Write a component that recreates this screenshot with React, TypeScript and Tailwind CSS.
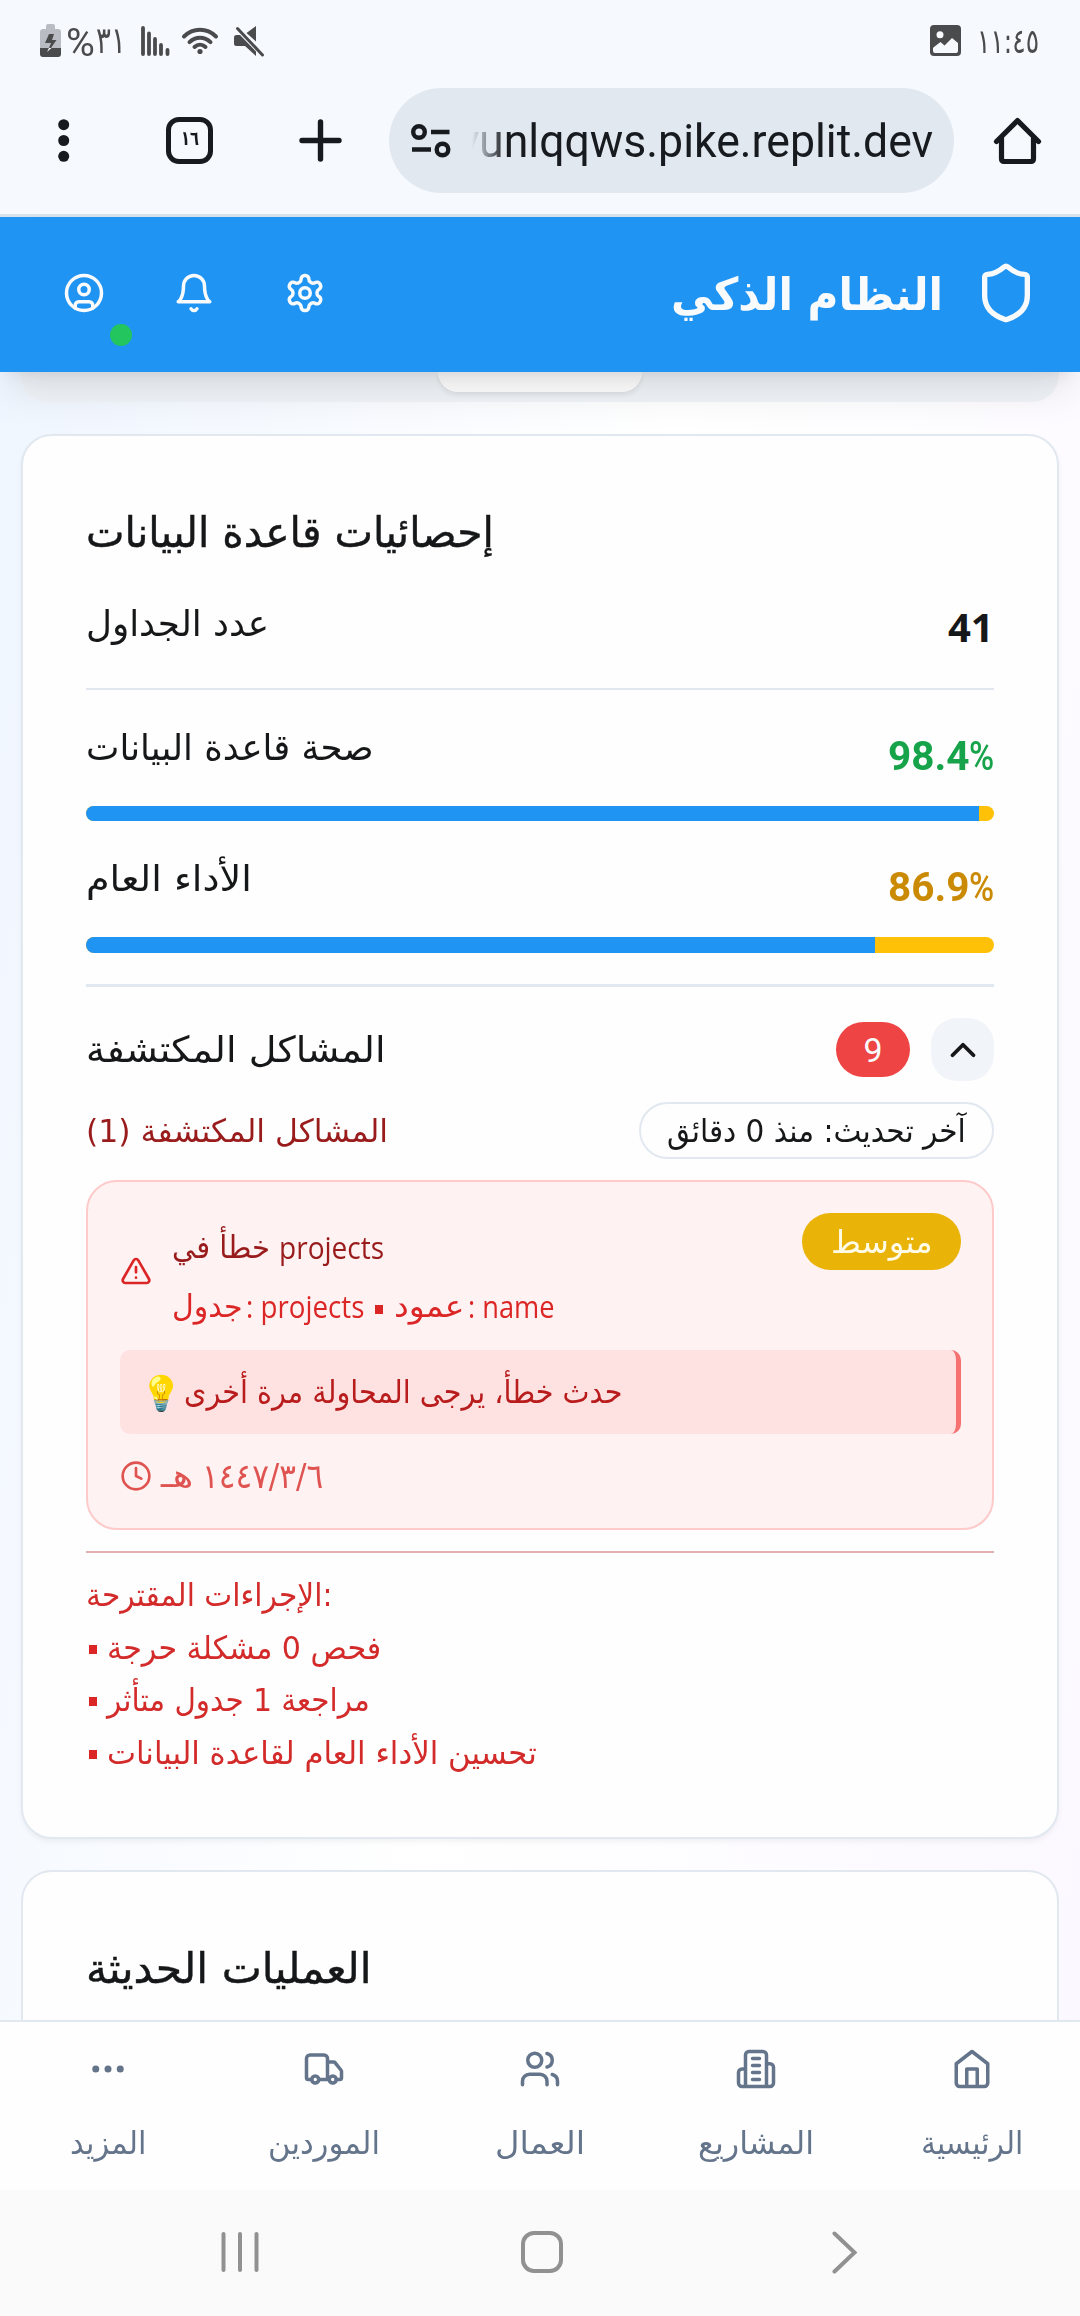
import { useLayoutEffect, useRef, useState } from "react";
import type { ReactNode } from "react";

const ARABIC = "font-['DejaVu_Sans_Condensed','DejaVu_Sans',sans-serif]";

/** One line of text, stretched or squeezed horizontally to a given width. */
function Fit({ w, className = "", dir, children }: { w: number; className?: string; dir?: "rtl" | "ltr"; children: ReactNode }) {
  const ref = useRef<HTMLSpanElement>(null);
  const [scale, setScale] = useState(1);
  useLayoutEffect(() => {
    if (ref.current) setScale(w / ref.current.offsetWidth);
  }, [w]);
  return (
    <span className={`block shrink-0 ${className}`} style={{ width: w }}>
      <span ref={ref} dir={dir} className="inline-block origin-left whitespace-nowrap" style={{ transform: `scaleX(${scale})` }}>
        {children}
      </span>
    </span>
  );
}

function Icon({ size, className = "", children, sw = 2 }: { size: number; className?: string; children: ReactNode; sw?: number }) {
  return (
    <svg width={size} height={size} viewBox="0 0 24 24" fill="none" stroke="currentColor" strokeWidth={sw} strokeLinecap="round" strokeLinejoin="round" className={`block shrink-0 ${className}`}>
      {children}
    </svg>
  );
}

function StatusBar() {
  return (
    <div className="flex h-[83px] items-start pl-10 pr-[41px] text-[#4a4b4d]">
      <svg className="mt-6 shrink-0" width="21" height="33" viewBox="0 0 21 33">
        <path d="M6 5V2a2 2 0 0 1 2-2h5a2 2 0 0 1 2 2v3h3a3 3 0 0 1 3 3v17H0V8a3 3 0 0 1 3-3z" fill="#b9bcc2" />
        <path d="M0 24h21v6a3 3 0 0 1-3 3H3a3 3 0 0 1-3-3z" fill="#4a4b4d" />
        <path d="M9 10h5l-2 6h4.500L11 24H9l2-5H5z" fill="#4a4b4d" />
        <path d="M9 24h2.500L7 28z" fill="#fff" />
      </svg>
      <Fit w={29} className="ml-[5px] mt-[23px] font-[Roboto] text-[38px] leading-[40px]">%</Fit>
      <Fit w={30} className={`ml-[1px] mt-[21px] text-[37px] leading-[40px] ${ARABIC}`}>٣١</Fit>
      <svg className="ml-[15px] mt-[26px] shrink-0" width="29" height="30" viewBox="0 0 29 30" stroke="currentColor" strokeWidth="3.800" strokeLinecap="round">
        <path d="M2 2v26M8 7.500V28M14 13v15M20 19v9M26.500 24v4" />
      </svg>
      <svg className="ml-[11px] mt-[27px] shrink-0" width="38" height="28" viewBox="0 0 38 28" fill="none" stroke="currentColor" strokeWidth="4" strokeLinecap="round">
        <path d="M3 9.500C12 .5 26 .5 35 9.500M8.500 15.200c6-6 15-6 21 0M13.500 20c3.300-3 7.700-3 11 0" />
        <circle cx="19" cy="24.500" r="2.600" fill="currentColor" stroke="none" />
      </svg>
      <svg className="ml-[15px] mt-[25px] shrink-0" width="31" height="32" viewBox="0 0 31 32" fill="currentColor">
        <path d="M12.500 8 22 1v15.500zM2.500 10H6l16 16.500V31L11 21H2.500Q0 21 0 18.500v-6Q0 10 2.500 10" />
        <path d="M3.500 3.500 28.500 30" stroke="currentColor" strokeWidth="3" strokeLinecap="round" />
      </svg>
      <div className="grow" />
      <svg className="mt-[25px] shrink-0" width="31" height="31" viewBox="0 0 31 31">
        <rect width="31" height="31" rx="4" fill="currentColor" />
        <path d="m4 22 6.500-5 4 3.500L22 13l6 5v8q0 2-2 2H5q-2 0-2-2v-3z" fill="#f6f9fe" />
        <circle cx="10" cy="9.800" r="3.500" fill="#f6f9fe" />
      </svg>
      <Fit w={62} className={`ml-[16px] mt-[21px] text-[34px] leading-[40px] ${ARABIC}`}>١١:٤٥</Fit>
    </div>
  );
}

function BrowserBar() {
  return (
    <div className="flex h-[134px] items-start border-b-[3px] border-[#d7e3eb] pl-[58px] text-[#171b1f]">
      <svg className="mt-9 shrink-0" width="12" height="44" viewBox="0 0 12 44" fill="currentColor">
        <circle cx="5.700" cy="5.700" r="5.500" />
        <circle cx="5.700" cy="21.500" r="5.500" />
        <circle cx="5.700" cy="37.300" r="5.500" />
      </svg>
      <div className="ml-24 mt-[34px] flex h-[47px] w-[47px] shrink-0 items-start justify-center rounded-[13px] border-[5px] border-[#171b1f]">
        <Fit w={18} className={`mt-[3px] text-[20px] font-bold leading-[26px] ${ARABIC}`}>١٦</Fit>
      </div>
      <svg className="ml-[86px] mt-9 shrink-0" width="43" height="43" viewBox="0 0 43 43" stroke="currentColor" strokeWidth="5.400" strokeLinecap="round">
        <path d="M21.500 3v37M3 21.500h37" />
      </svg>
      <div className="ml-[47px] mt-[5px] flex h-[105px] w-[565px] shrink-0 items-start rounded-full bg-[#e2e8f0] pl-[22px]">
        <svg className="mt-9 shrink-0" width="40" height="34" viewBox="0 0 40 34" fill="none" stroke="currentColor" strokeWidth="4.400">
          <circle cx="8" cy="8" r="5.800" />
          <path d="M20 8h18.500M1 25.500h19" />
          <circle cx="31.500" cy="25.500" r="5.800" />
        </svg>
        <Fit w={475} className="ml-[7px] mt-[18px] font-[Roboto] text-[46px] leading-[70px] [mask-image:linear-gradient(to_right,transparent_14px,black_48px)]">yunlqqws.pike.replit.dev</Fit>
      </div>
      <svg className="ml-[39px] mt-[34px] shrink-0" width="49" height="47" viewBox="0 0 49 47" fill="none" stroke="currentColor" strokeWidth="5.200" strokeLinecap="round" strokeLinejoin="round">
        <path d="M3.500 24.500 24.500 3.500l21 21M8.500 21v20.500q0 3 3 3h26q3 0 3-3V21" />
      </svg>
    </div>
  );
}

function AppHeader() {
  return (
    <header className="relative z-10 flex h-[155px] items-center bg-[#2094f3] pb-[3px] pl-[63px] pr-[42px] text-[#f8fafc] shadow-[0_26px_39px_-8px_rgba(0,0,0,0.1),0_10px_16px_-10px_rgba(0,0,0,0.1)]">
      <div className="relative">
        <Icon size={42}>
          <circle cx="12" cy="12" r="10" />
          <circle cx="12" cy="10" r="3" />
          <path d="M7 20.662V19a2 2 0 0 1 2-2h6a2 2 0 0 1 2 2v1.662" />
        </Icon>
        <span className="absolute left-[47px] top-[52px] h-[22px] w-[22px] rounded-full bg-[#22c55e]" />
      </div>
      <Icon size={42} className="ml-[68px]">
        <path d="M6 8a6 6 0 0 1 12 0c0 7 3 9 3 9H3s3-2 3-9" />
        <path d="M10.300 21a1.940 1.940 0 0 0 3.400 0" />
      </Icon>
      <Icon size={42} className="ml-[69px]">
        <path d="M12.220 2h-.44a2 2 0 0 0-2 2v.18a2 2 0 0 1-1 1.730l-.43.25a2 2 0 0 1-2 0l-.15-.08a2 2 0 0 0-2.730.73l-.22.38a2 2 0 0 0 .73 2.730l.15.1a2 2 0 0 1 1 1.720v.51a2 2 0 0 1-1 1.740l-.15.09a2 2 0 0 0-.73 2.730l.22.38a2 2 0 0 0 2.730.73l.15-.08a2 2 0 0 1 2 0l.43.25a2 2 0 0 1 1 1.730V20a2 2 0 0 0 2 2h.44a2 2 0 0 0 2-2v-.18a2 2 0 0 1 1-1.730l.43-.25a2 2 0 0 1 2 0l.15.08a2 2 0 0 0 2.730-.73l.22-.39a2 2 0 0 0-.73-2.730l-.15-.08a2 2 0 0 1-1-1.740v-.5a2 2 0 0 1 1-1.740l.15-.09a2 2 0 0 0 .73-2.730l-.22-.38a2 2 0 0 0-2.730-.73l-.15.08a2 2 0 0 1-2 0l-.43-.25a2 2 0 0 1-1-1.730V4a2 2 0 0 0-2-2z" />
        <circle cx="12" cy="12" r="3" />
      </Icon>
      <div className="grow" />
      <Fit w={272} dir="rtl" className={`mt-1 text-[45px] font-bold leading-[60px] ${ARABIC}`}>النظام الذكي</Fit>
      <Icon size={64} className="ml-[31px]">
        <path d="M20 13c0 5-3.500 7.500-7.660 8.950a1 1 0 0 1-.67-.01C7.500 20.500 4 18 4 13V6a1 1 0 0 1 1-1c2 0 4.500-1.200 6.240-2.720a1.170 1.170 0 0 1 1.520 0C14.510 3.810 17 5 19 5a1 1 0 0 1 1 1z" />
      </Icon>
    </header>
  );
}

function Metric({ label, labelWidth, value, valueColor, percent, barHeight }: { label: string; labelWidth: number; value: string; valueColor: string; percent: number; barHeight: string }) {
  return (
    <>
      <div className="flex h-[116px] items-start justify-between">
        <Fit w={labelWidth} dir="rtl" className={`mt-[28px] text-[36px] leading-[60px] ${ARABIC}`}>{label}</Fit>
        <div className={`mt-[36px] flex font-[Roboto] text-[41px] leading-[60px] ${valueColor}`}>
          <Fit w={81} className="font-bold">{value}</Fit>
          <Fit w={25} className="font-medium">%</Fit>
        </div>
      </div>
      <div className={`overflow-hidden rounded-full bg-[#ffc107] ${barHeight}`}>
        <div className="h-full bg-[#2094f3]" style={{ width: `${percent}%` }} />
      </div>
    </>
  );
}

const actions = [
  { text: "فحص 0 مشكلة حرجة", width: 274 },
  { text: "مراجعة 1 جدول متأثر", width: 263 },
  { text: "تحسين الأداء العام لقاعدة البيانات", width: 430 },
];

function IssueBox() {
  return (
    <div className="mt-[21px] h-[350px] rounded-[31px] border-2 border-[#fecaca] bg-[#fef2f2] pl-8 pr-[31px] pt-[31px]">
      <div className="flex h-[137px] items-start">
        <Icon size={32} className="mt-[42px] text-[#dc2626]">
          <path d="m21.730 18-8-14a2 2 0 0 0-3.460 0l-8 14A2 2 0 0 0 4 21h16a2 2 0 0 0 1.730-3Z" />
          <path d="M12 9v4M12 17h.01" />
        </Icon>
        <div className="ml-5 mt-[5px] grow text-[31px] leading-[59px]">
          <div className="flex text-[#991b1b]">
            <Fit w={98} dir="rtl" className={ARABIC}>خطأ في</Fit>
            <Fit w={105} className="ml-[9px] font-['Open_Sans']">projects</Fit>
          </div>
          <div className="flex text-[#dc2626]">
            <Fit w={71} dir="rtl" className={ARABIC}>جدول</Fit>
            <Fit w={118} className="ml-[3px] font-['Open_Sans']">: projects</Fit>
            <span className="ml-[11px] mt-[28px] h-[9px] w-[8px] bg-[#dc2626]" />
            <Fit w={71} dir="rtl" className={`ml-[11px] ${ARABIC}`}>عمود</Fit>
            <Fit w={87} className="ml-[3px] font-['Open_Sans']">: name</Fit>
          </div>
        </div>
        <div className="flex h-[57px] w-[159px] items-center justify-center rounded-full bg-[#eab308] text-[#fefce8]">
          <Fit w={101} dir="rtl" className={`text-[32px] leading-[50px] ${ARABIC}`}>متوسط</Fit>
        </div>
      </div>
      <div className="flex h-[84px] items-center rounded-[10px] border-r-[5px] border-[#f87171] bg-[#fee2e2] pl-[20px] text-[#b91c1c]">
        <span className="w-[44px] text-[34px] leading-[40px]">💡</span>
        <Fit w={438} dir="rtl" className={`text-[32px] leading-[60px] ${ARABIC}`}>حدث خطأ، يرجى المحاولة مرة أخرى</Fit>
      </div>
      <div className="mt-3 flex h-[60px] items-center text-[#df5350]">
        <Icon size={32}>
          <circle cx="12" cy="12" r="10" />
          <path d="M12 6v6l4 2" />
        </Icon>
        <Fit w={33} dir="rtl" className={`ml-[9px] text-[32px] leading-[60px] ${ARABIC}`}>هـ</Fit>
        <Fit w={121} dir="ltr" className={`ml-[8px] text-[34px] leading-[60px] ${ARABIC}`}>١٤٤٧/٣/٦</Fit>
      </div>
    </div>
  );
}

function DatabaseCard() {
  return (
    <section className="h-[1405px] rounded-[31px] border-2 border-[#e2e8f0] bg-[#fefefe] px-[63px] pt-[69px] text-[#161718] shadow-[0_3px_5px_rgba(0,0,0,0.05)]">
      <Fit w={408} dir="rtl" className={`h-[55px] text-[42px] leading-[55px] [-webkit-text-stroke:0.4px] ${ARABIC}`}>إحصائيات قاعدة البيانات</Fit>
      <div className="flex h-[130px] items-center justify-between border-b-2 border-[#e2e8f0]">
        <Fit w={183} dir="rtl" className={`text-[36px] leading-[60px] ${ARABIC}`}>عدد الجداول</Fit>
        <Fit w={46} className="mt-[5px] font-['Open_Sans'] text-[40px] font-bold leading-[60px]">41</Fit>
      </div>
      <Metric label="صحة قاعدة البيانات" labelWidth={288} value="98.4" valueColor="text-[#16a34a]" percent={98.4} barHeight="h-[15px]" />
      <Metric label="الأداء العام" labelWidth={166} value="86.9" valueColor="text-[#ca8a04]" percent={86.9} barHeight="h-[16px]" />
      <div className="mt-[31px] h-[3px] bg-[#e2e8f0]" />
      <div className="mt-[31px] flex h-[63px] items-center">
        <Fit w={299} dir="rtl" className={`text-[36px] leading-[60px] ${ARABIC}`}>المشاكل المكتشفة</Fit>
        <div className="grow" />
        <div className="flex h-[55px] w-[74px] items-center justify-center rounded-full bg-[#ef4444] text-[#f8fafc]">
          <Fit w={19} className="font-[Roboto] text-[34px] leading-[50px]">9</Fit>
        </div>
        <div className="ml-[21px] flex h-[63px] w-[63px] items-center justify-center rounded-[26px] bg-[#f1f5f9]">
          <Icon size={42} sw={2.200}><path d="m18 15-6-6-6 6" /></Icon>
        </div>
      </div>
      <div className="mt-[21px] flex h-[57px] items-center justify-between">
        <Fit w={302} dir="rtl" className={`text-[32px] leading-[50px] text-[#991b1b] ${ARABIC}`}>المشاكل المكتشفة (1)</Fit>
        <div className="flex h-[57px] w-[355px] items-center justify-center rounded-full border-2 border-[#e2e8f0]">
          <Fit w={299} dir="rtl" className={`text-[32px] leading-[50px] ${ARABIC}`}>آخر تحديث: منذ 0 دقائق</Fit>
        </div>
      </div>
      <IssueBox />
      <div className="mt-[21px] h-[2px] bg-[#e3b0b0]" />
      <div className="mt-4 text-[32px] leading-[52.700px] text-[#d32a2a]">
        <Fit w={246} dir="ltr" className={ARABIC}>الإجراءات المقترحة:</Fit>
        {actions.map((a) => (
          <div key={a.text} className="flex items-center">
            <span className="ml-[3px] mr-[10px] mt-[2px] h-[9px] w-[8px] bg-[#dc2626]" />
            <Fit w={a.width} dir="rtl" className={ARABIC}>{a.text}</Fit>
          </div>
        ))}
      </div>
    </section>
  );
}

const tabs = [
  { label: "المزيد", width: 76, icon: <><circle cx="12" cy="12" r="1" /><circle cx="19" cy="12" r="1" /><circle cx="5" cy="12" r="1" /></> },
  { label: "الموردين", width: 112, icon: <><path d="M14 18V6a2 2 0 0 0-2-2H4a2 2 0 0 0-2 2v11a1 1 0 0 0 1 1h2M15 18H9M19 18h2a1 1 0 0 0 1-1v-3.650a1 1 0 0 0-.22-.624l-3.480-4.350A1 1 0 0 0 17.520 8H14" /><circle cx="17" cy="18" r="2" /><circle cx="7" cy="18" r="2" /></> },
  { label: "العمال", width: 90, icon: <><path d="M16 21v-2a4 4 0 0 0-4-4H6a4 4 0 0 0-4 4v2" /><circle cx="9" cy="7" r="4" /><path d="M22 21v-2a4 4 0 0 0-3-3.870M16 3.130a4 4 0 0 1 0 7.750" /></> },
  { label: "المشاريع", width: 116, icon: <path d="M6 22V4a2 2 0 0 1 2-2h8a2 2 0 0 1 2 2v18ZM6 12H4a2 2 0 0 0-2 2v6a2 2 0 0 0 2 2h2M18 9h2a2 2 0 0 1 2 2v9a2 2 0 0 1-2 2h-2M10 6h4M10 10h4M10 14h4M10 18h4" /> },
  { label: "الرئيسية", width: 102, icon: <path d="m3 9 9-7 9 7v11a2 2 0 0 1-2 2H5a2 2 0 0 1-2-2zM9 22V12h6v10" /> },
];

function BottomNav() {
  return (
    <nav className="grid h-[170px] grid-cols-5 border-t-2 border-[#e2e8f0] bg-[#fefefe] text-[#64748b]">
      {tabs.map((t) => (
        <div key={t.label} className="flex flex-col items-center pt-[26px]">
          <Icon size={42}>{t.icon}</Icon>
          <Fit w={t.width} dir="rtl" className={`mt-[28px] text-[32px] leading-[50px] ${ARABIC}`}>{t.label}</Fit>
        </div>
      ))}
    </nav>
  );
}

function SystemNav() {
  return (
    <div className="flex h-[126px] items-start bg-[#fafafa] pl-[221px] pt-[41px] text-[#919191]">
      <svg className="shrink-0" width="38" height="42" viewBox="0 0 38 42" stroke="currentColor" strokeWidth="4" strokeLinecap="round">
        <path d="M2.500 3v36M19 3v36M35.500 3v36" />
      </svg>
      <div className="ml-[262px] h-[42px] w-[42px] rounded-[13px] border-4 border-[#919191]" />
      <svg className="ml-[269px] shrink-0" width="26" height="43" viewBox="0 0 26 43" fill="none" stroke="currentColor" strokeWidth="4" strokeLinecap="round">
        <path d="m2.500 2.500 20 19-20 19" />
      </svg>
    </div>
  );
}

export default function App() {
  return (
    <div className="flex h-[2316px] w-[1080px] flex-col overflow-hidden bg-[#f6f9fe]">
      <StatusBar />
      <BrowserBar />
      <AppHeader />
      <main className="h-[1648px] overflow-hidden bg-[linear-gradient(100deg,#f0f6ff,#ffffff_50%,#fbf8ff)] px-[21px]">
        <div className="mb-8 flex h-[30px] justify-center rounded-b-[27px] bg-[#f1f5f9]">
          <div className="h-5 w-[204px] rounded-b-[20px] bg-white shadow-[0_3px_5px_rgba(0,0,0,0.08)]" />
        </div>
        <DatabaseCard />
        <section className="mt-[31px] h-[300px] rounded-[31px] border-2 border-[#e2e8f0] bg-[#fefefe] px-[63px] pt-[69px] text-[#161718]">
          <Fit w={285} dir="rtl" className={`text-[42px] leading-[55px] [-webkit-text-stroke:0.4px] ${ARABIC}`}>العمليات الحديثة</Fit>
        </section>
      </main>
      <BottomNav />
      <SystemNav />
    </div>
  );
}
